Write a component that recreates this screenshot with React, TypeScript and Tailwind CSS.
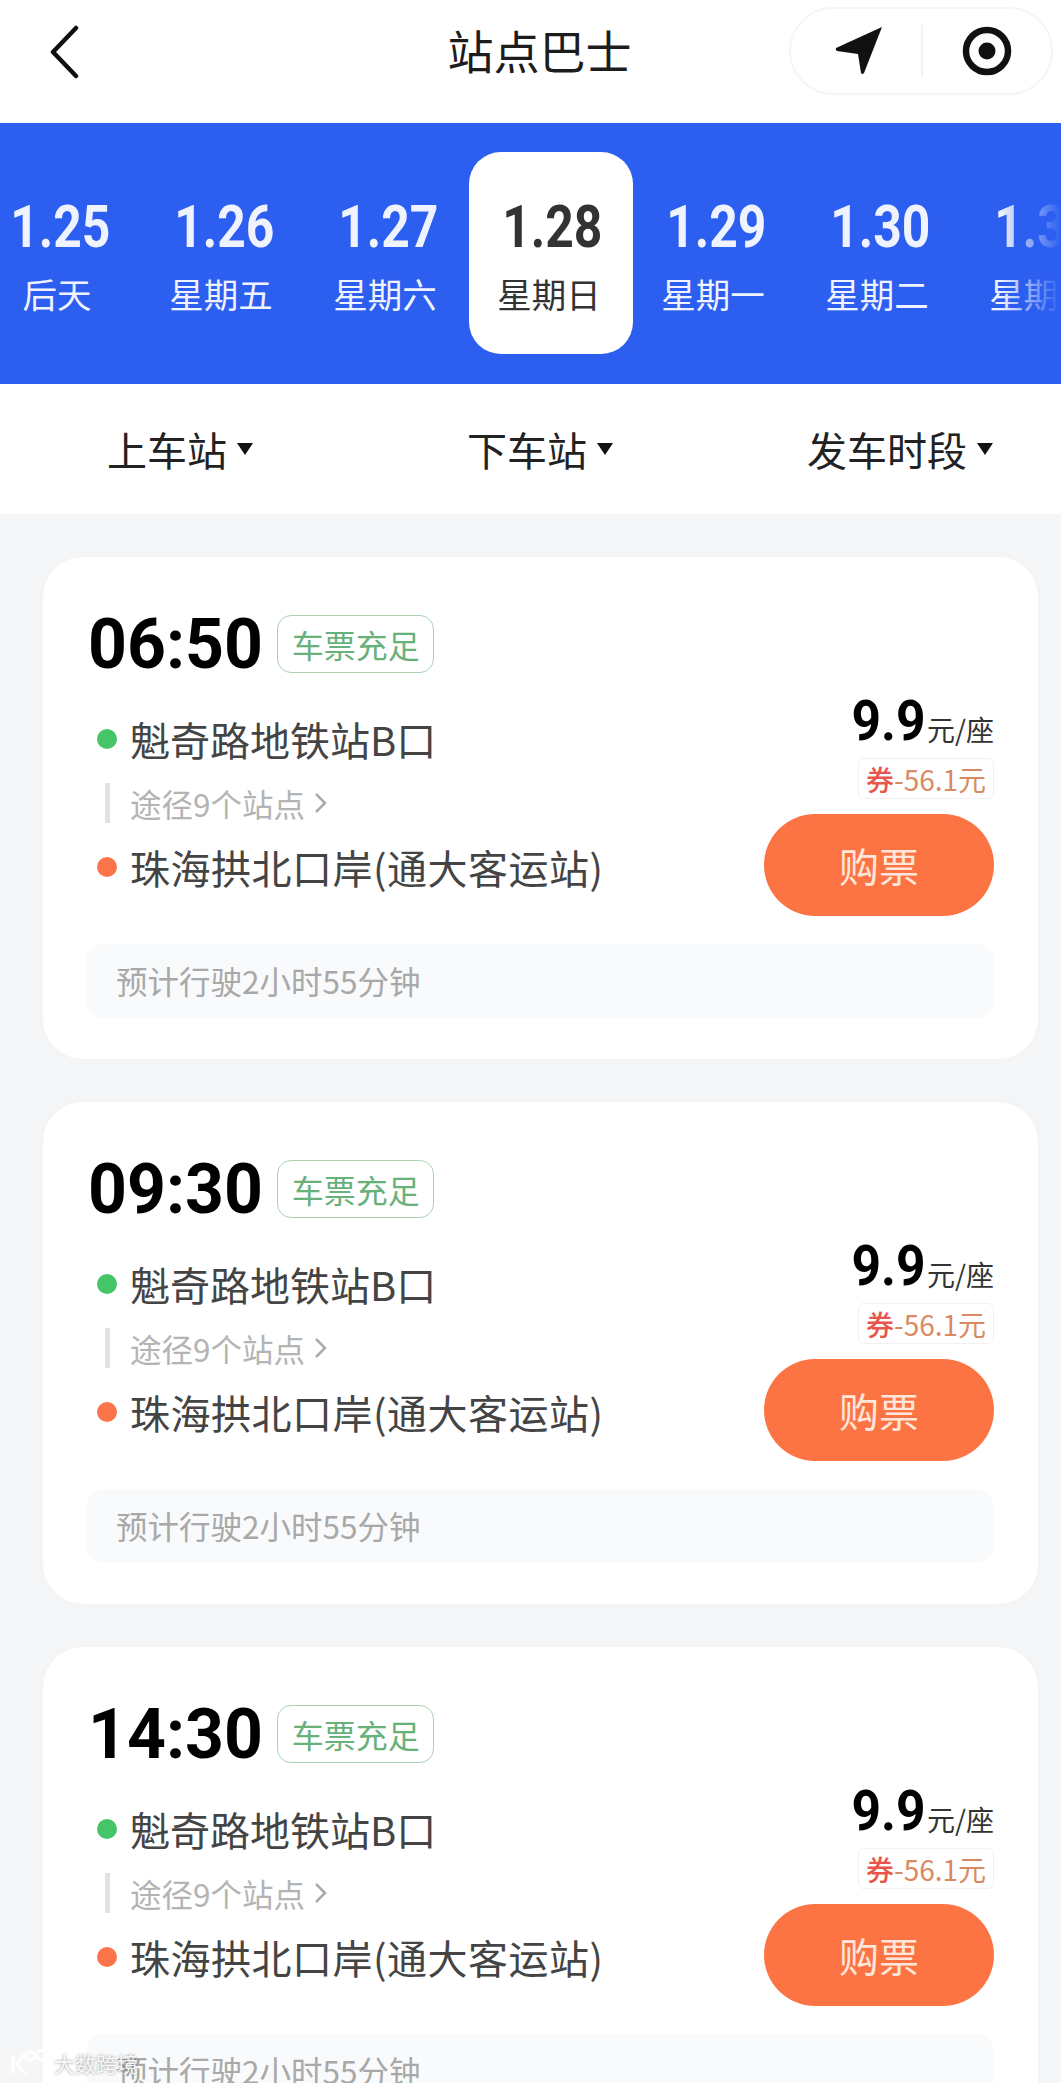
const CJK = "font-['Noto_Sans_CJK_SC','Noto_Sans',sans-serif]";

const DATE_LIST = [
  { date: "1.25", label: "后天" },
  { date: "1.26", label: "星期五" },
  { date: "1.27", label: "星期六" },
  { date: "1.28", label: "星期日", active: true },
  { date: "1.29", label: "星期一" },
  { date: "1.30", label: "星期二" },
  { date: "1.31", label: "星期三" },
];
const TIME_LIST = ["06:50", "09:30", "14:30"];
const FILTER_LIST = ["上车站", "下车站", "发车时段"];

const Header = () => {
  return (
    <div className="relative flex h-[123px] items-start bg-white">
      <svg className="ml-[48px] mt-[25px]" width="32" height="54" viewBox="0 0 32 54" fill="none">
        <path d="M28 3 L5 27 L28 51" stroke="#111" strokeWidth="4.5" strokeLinecap="round" strokeLinejoin="round" />
      </svg>
      <div className="absolute left-[18px] right-0 top-[17px] text-center text-[46px] leading-[64px] text-[#1c1c1c]">站点巴士</div>
      <div className="absolute left-[789px] top-[7px] flex h-[88px] w-[264px] items-center rounded-[44px] border-2 border-[#f5f5f5]">
        <div className="flex w-[130px] justify-center pl-[6px]">
          <svg width="48" height="48" viewBox="0 0 48 48">
            <path d="M47 0 L1 21 Q0 23 2 24 L23 27 L26 46 Q27 48 29 46 Z" fill="#111" />
          </svg>
        </div>
        <div className="h-[52px] w-[2px] bg-[#f2f2f2]" />
        <div className="flex flex-1 justify-center">
          <svg width="50" height="50" viewBox="0 0 50 50" fill="none">
            <circle cx="25" cy="25" r="21" stroke="#111" strokeWidth="6.5" />
            <circle cx="25" cy="25" r="8.5" fill="#111" />
          </svg>
        </div>
      </div>
    </div>
  );
};

const DateBar = () => {
  return (
    <div className="relative flex h-[261px] items-center overflow-hidden bg-[#2c5ef0]">
      <div className="-ml-[23px] mb-[2px] flex shrink-0">
        {DATE_LIST.map((item) => {
          return (
            <div
              key={item.date}
              className={`flex h-[202px] w-[164px] shrink-0 flex-col items-center rounded-[32px] pt-[40px] ${
                item.active ? "bg-white text-[#333]" : "text-[#eef3ff]"
              }`}
            >
              <span className="origin-center translate-x-[1px] scale-x-[0.83] font-['Roboto',sans-serif] text-[60px] font-bold leading-[70px]">{item.date}</span>
              <span className="mt-[7px] -translate-x-[2px] text-[34.5px] leading-[48px]">{item.label}</span>
            </div>
          );
        })}
      </div>
      <div className="absolute bottom-0 right-0 top-0 w-[60px] bg-gradient-to-r from-transparent to-[#2c5ef0]" />
    </div>
  );
};

const FilterBar = () => {
  return (
    <div className="flex h-[130px] items-center overflow-hidden bg-white">
      {FILTER_LIST.map((name) => {
        return (
          <div key={name} className="flex w-[360px] shrink-0 items-center justify-center gap-[10px]">
            <span className="text-[40px] leading-[56px] text-[#222]">{name}</span>
            <span className="h-0 w-0 border-x-[8px] border-t-[12px] border-x-transparent border-t-[#111]" />
          </div>
        );
      })}
    </div>
  );
};

const TicketCard = ({ time }: { time: string }) => {
  return (
    <div className="h-[502px] w-[995px] shrink-0 rounded-[40px] bg-white pl-[45px] pr-[44px] pt-[58px] shadow-[0_0_14px_rgba(0,0,0,0.025)]">
      <div className="flex h-[58px] items-center gap-[9px]">
        <span className="origin-left scale-x-[0.97] font-['Roboto',sans-serif] text-[70px] font-bold leading-[56px] text-black">{time}</span>
        <span className="flex h-[58px] w-[157px] items-center justify-center rounded-[14px] border border-[#a9d3b2] text-[32px] text-[#69b17a]">车票充足</span>
      </div>

      <div className="flex h-[244px] justify-between">
        <div className="pt-[42px]">
          <div className="flex h-[48px] items-center gap-[13px] pl-[9px]">
            <span className="h-[20px] w-[20px] rounded-full bg-[#46c468]" />
            <span className="text-[40px] leading-[48px] text-[#444]">魁奇路地铁站B口</span>
          </div>
          <div className="mt-[20px] flex h-[40px] items-center gap-[20px] pl-[17px]">
            <span className="h-[40px] w-[5px] bg-[#e2e2e2]" />
            <span className="text-[31.5px] leading-[40px] text-[#b4b4b4]">途径9个站点</span>
            <svg className="-ml-[11px]" width="14" height="22" viewBox="0 0 14 22" fill="none">
              <path d="M2 2 L11 11 L2 20" stroke="#aaa" strokeWidth="2.5" />
            </svg>
          </div>
          <div className="mt-[20px] flex h-[48px] items-center gap-[13px] pl-[9px]">
            <span className="h-[20px] w-[20px] rounded-full bg-[#fb744a]" />
            <span className="text-[40px] leading-[48px] tracking-[0.5px] text-[#444]">珠海拱北口岸(通大客运站)</span>
          </div>
        </div>

        <div className="flex flex-col items-end pt-[17px]">
          <div className="flex h-[62px] items-end gap-[2px]">
            <span className="origin-right scale-x-[0.92] font-['Roboto',sans-serif] text-[56px] font-bold leading-[62px] text-black">9.9</span>
            <span className="pb-[3px] text-[28px] leading-[40px] text-[#333]">元/座</span>
          </div>
          <div className="mt-[6px] flex h-[41px] w-[136px] items-center justify-center rounded-[6px] border border-[#f1f1f1] text-[28px] leading-[40px]">
            <span className="font-medium text-[#e8554a]">券</span>
            <span className="text-[#d98a62]">-56.1元</span>
          </div>
          <button className="mt-[15px] h-[102px] w-[230px] rounded-[51px] bg-[#fd7444] text-[40px] text-[#ffe6da]">购票</button>
        </div>
      </div>

      <div className="-ml-[2px] mt-[27px] flex h-[74px] items-center rounded-[18px] bg-[#f9fafc] pl-[30px] text-[31.5px] text-[#a8a8a8]">
        预计行驶2小时55分钟
      </div>
    </div>
  );
};

const Watermark = () => {
  return (
    <div className="absolute bottom-[6px] left-[10px] flex items-center gap-[6px] text-white/90 [text-shadow:0_0_3px_rgba(0,0,0,0.45)]">
      <svg width="38" height="28" viewBox="0 0 38 28" fill="none" stroke="#fff" strokeOpacity="0.9" strokeWidth="3">
        <path d="M3 6 V25 M15 5 L6 15 L16 25" />
        <circle cx="20" cy="7" r="4.5" />
        <circle cx="31" cy="6" r="4.5" />
      </svg>
      <span className="text-[21px] leading-[26px]">大数跨境</span>
    </div>
  );
};

const App = () => {
  return (
    <div className={`relative h-[2083px] w-[1061px] overflow-hidden bg-[#f5f6f8] ${CJK}`}>
      <Header />
      <DateBar />
      <FilterBar />
      <div className="ml-[43px] flex flex-col gap-[43px] pt-[43px]">
        {TIME_LIST.map((time) => {
          return <TicketCard key={time} time={time} />;
        })}
      </div>
      <Watermark />
    </div>
  );
};

export default App;
